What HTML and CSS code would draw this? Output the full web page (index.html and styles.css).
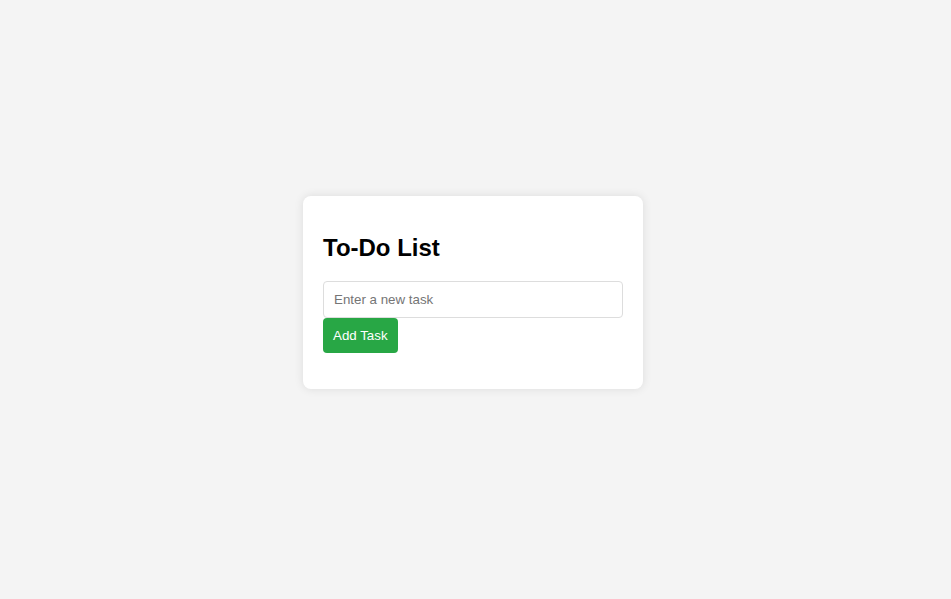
FILE: index.html
```html
<!DOCTYPE html>
<html lang="en">
<head>
<meta charset="UTF-8">
<title>To-Do List</title>
<link rel="stylesheet" href="styles.css">
</head>
<body>
<div class="card">
  <h2 class="title">To-Do List</h2>
  <input class="task-input" type="text" placeholder="Enter a new task">
  <button class="add-btn">Add Task</button>
  <ul class="task-list"></ul>
</div>
</body>
</html>
```
FILE: styles.css
```css
* { box-sizing: border-box; }
html, body { height: 100%; }
body {
  margin: 0;
  background: #f4f4f4;
  font-family: "Liberation Sans", Arial, sans-serif;
  display: flex;
  justify-content: center;
  align-items: center;
  padding-bottom: 14px;
  padding-right: 5px;
}
.card {
  width: 340px;
  background: #fff;
  padding: 20px;
  border-radius: 8px;
  box-shadow: 0 0 10px rgba(0, 0, 0, 0.1);
}
.title {
  font-size: 24px;
  font-weight: bold;
  margin: 18px 0 19px;
  color: #000;
}
.task-input {
  display: block;
  width: 100%;
  padding: 10px;
  font-family: "Liberation Sans", Arial, sans-serif;
  font-size: 13.333px;
  border: 1px solid #ddd;
  border-radius: 4px;
  outline: none;
}
.task-input::placeholder { color: #757575; }
.add-btn {
  display: block;
  padding: 10px;
  font-family: "Liberation Sans", Arial, sans-serif;
  font-size: 13.333px;
  background: #28a745;
  color: #fff;
  border: none;
  border-radius: 4px;
  cursor: pointer;
}
.task-list {
  list-style: none;
  padding: 0;
  margin: 16px 0 0;
}
```
